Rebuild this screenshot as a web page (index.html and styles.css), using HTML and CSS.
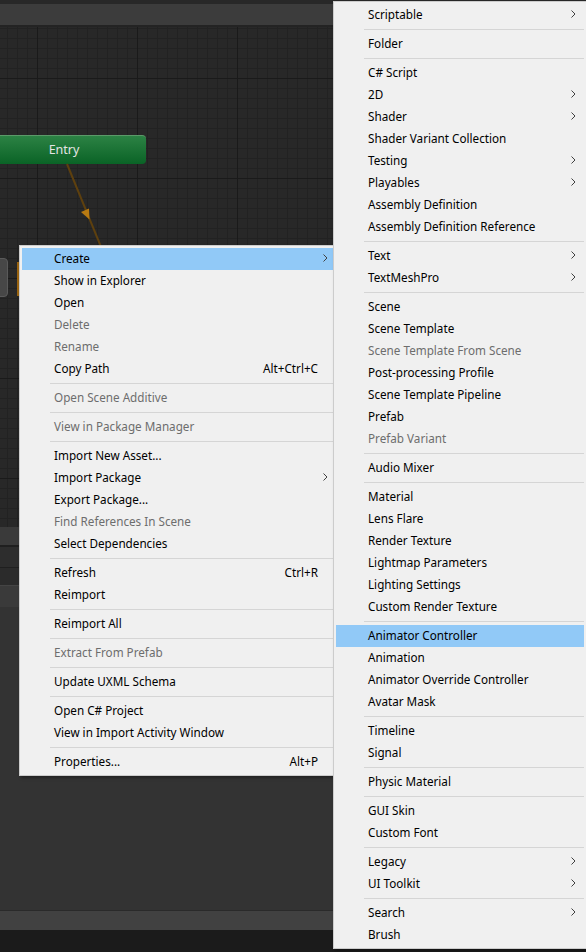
FILE: index.html
```html
<!DOCTYPE html>
<html>
<head>
<meta charset="utf-8">
<title>Unity Create Menu</title>
<link rel="stylesheet" href="styles.css">
</head>
<body>
<div class="screen">
  <div class="editor">
    <div class="topstrip"></div>
    <div class="toolbar"></div>
    <div class="graph">
      <div class="node node-left"></div>
      <div class="sel-edge"></div>
      <div class="node entry">Entry</div>
      <svg class="transition" width="340" height="500" viewBox="0 0 340 500">
        <line x1="67" y1="137" x2="106" y2="232" stroke="#5e400e" stroke-width="2"/>
        <polygon points="89.5,192.5 89,181.5 81,185" fill="#b87a12"/>
      </svg>
    </div>
    <div class="band b1"></div>
    <div class="band b2"></div>
    <div class="band b3"></div>
    <div class="band b4"></div>
    <div class="panel"></div>
    <div class="bottombar"></div>
    <div class="status"></div>
  </div>

  <div class="menu menu-main">
    <div class="item has-sub active"><span class="label">Create</span><span class="sub"><svg width="5" height="8" viewBox="0 0 5 8"><polyline points="0.5,0.5 4,4 0.5,7.5" fill="none" stroke="#404040" stroke-width="1"/></svg></span></div>
    <div class="item"><span class="label">Show in Explorer</span></div>
    <div class="item"><span class="label">Open</span></div>
    <div class="item disabled"><span class="label">Delete</span></div>
    <div class="item disabled"><span class="label">Rename</span></div>
    <div class="item"><span class="label">Copy Path</span><span class="key">Alt+Ctrl+C</span></div>
    <div class="sep"></div>
    <div class="item disabled"><span class="label">Open Scene Additive</span></div>
    <div class="sep"></div>
    <div class="item disabled"><span class="label">View in Package Manager</span></div>
    <div class="sep"></div>
    <div class="item"><span class="label">Import New Asset...</span></div>
    <div class="item has-sub"><span class="label">Import Package</span><span class="sub"><svg width="5" height="8" viewBox="0 0 5 8"><polyline points="0.5,0.5 4,4 0.5,7.5" fill="none" stroke="#404040" stroke-width="1"/></svg></span></div>
    <div class="item"><span class="label">Export Package...</span></div>
    <div class="item disabled"><span class="label">Find References In Scene</span></div>
    <div class="item"><span class="label">Select Dependencies</span></div>
    <div class="sep"></div>
    <div class="item"><span class="label">Refresh</span><span class="key">Ctrl+R</span></div>
    <div class="item"><span class="label">Reimport</span></div>
    <div class="sep"></div>
    <div class="item"><span class="label">Reimport All</span></div>
    <div class="sep"></div>
    <div class="item disabled"><span class="label">Extract From Prefab</span></div>
    <div class="sep"></div>
    <div class="item"><span class="label">Update UXML Schema</span></div>
    <div class="sep"></div>
    <div class="item"><span class="label">Open C# Project</span></div>
    <div class="item"><span class="label">View in Import Activity Window</span></div>
    <div class="sep"></div>
    <div class="item"><span class="label">Properties...</span><span class="key">Alt+P</span></div>
  </div>

  <div class="menu menu-sub">
    <div class="item has-sub"><span class="label">Scriptable</span><span class="sub"><svg width="5" height="8" viewBox="0 0 5 8"><polyline points="0.5,0.5 4,4 0.5,7.5" fill="none" stroke="#404040" stroke-width="1"/></svg></span></div>
    <div class="sep"></div>
    <div class="item"><span class="label">Folder</span></div>
    <div class="sep"></div>
    <div class="item"><span class="label">C# Script</span></div>
    <div class="item has-sub"><span class="label">2D</span><span class="sub"><svg width="5" height="8" viewBox="0 0 5 8"><polyline points="0.5,0.5 4,4 0.5,7.5" fill="none" stroke="#404040" stroke-width="1"/></svg></span></div>
    <div class="item has-sub"><span class="label">Shader</span><span class="sub"><svg width="5" height="8" viewBox="0 0 5 8"><polyline points="0.5,0.5 4,4 0.5,7.5" fill="none" stroke="#404040" stroke-width="1"/></svg></span></div>
    <div class="item"><span class="label">Shader Variant Collection</span></div>
    <div class="item has-sub"><span class="label">Testing</span><span class="sub"><svg width="5" height="8" viewBox="0 0 5 8"><polyline points="0.5,0.5 4,4 0.5,7.5" fill="none" stroke="#404040" stroke-width="1"/></svg></span></div>
    <div class="item has-sub"><span class="label">Playables</span><span class="sub"><svg width="5" height="8" viewBox="0 0 5 8"><polyline points="0.5,0.5 4,4 0.5,7.5" fill="none" stroke="#404040" stroke-width="1"/></svg></span></div>
    <div class="item"><span class="label">Assembly Definition</span></div>
    <div class="item"><span class="label">Assembly Definition Reference</span></div>
    <div class="sep"></div>
    <div class="item has-sub"><span class="label">Text</span><span class="sub"><svg width="5" height="8" viewBox="0 0 5 8"><polyline points="0.5,0.5 4,4 0.5,7.5" fill="none" stroke="#404040" stroke-width="1"/></svg></span></div>
    <div class="item has-sub"><span class="label">TextMeshPro</span><span class="sub"><svg width="5" height="8" viewBox="0 0 5 8"><polyline points="0.5,0.5 4,4 0.5,7.5" fill="none" stroke="#404040" stroke-width="1"/></svg></span></div>
    <div class="sep"></div>
    <div class="item"><span class="label">Scene</span></div>
    <div class="item"><span class="label">Scene Template</span></div>
    <div class="item disabled"><span class="label">Scene Template From Scene</span></div>
    <div class="item"><span class="label">Post-processing Profile</span></div>
    <div class="item"><span class="label">Scene Template Pipeline</span></div>
    <div class="item"><span class="label">Prefab</span></div>
    <div class="item disabled"><span class="label">Prefab Variant</span></div>
    <div class="sep"></div>
    <div class="item"><span class="label">Audio Mixer</span></div>
    <div class="sep"></div>
    <div class="item"><span class="label">Material</span></div>
    <div class="item"><span class="label">Lens Flare</span></div>
    <div class="item"><span class="label">Render Texture</span></div>
    <div class="item"><span class="label">Lightmap Parameters</span></div>
    <div class="item"><span class="label">Lighting Settings</span></div>
    <div class="item"><span class="label">Custom Render Texture</span></div>
    <div class="sep"></div>
    <div class="item active"><span class="label">Animator Controller</span></div>
    <div class="item"><span class="label">Animation</span></div>
    <div class="item"><span class="label">Animator Override Controller</span></div>
    <div class="item"><span class="label">Avatar Mask</span></div>
    <div class="sep"></div>
    <div class="item"><span class="label">Timeline</span></div>
    <div class="item"><span class="label">Signal</span></div>
    <div class="sep"></div>
    <div class="item"><span class="label">Physic Material</span></div>
    <div class="sep"></div>
    <div class="item"><span class="label">GUI Skin</span></div>
    <div class="item"><span class="label">Custom Font</span></div>
    <div class="sep"></div>
    <div class="item has-sub"><span class="label">Legacy</span><span class="sub"><svg width="5" height="8" viewBox="0 0 5 8"><polyline points="0.5,0.5 4,4 0.5,7.5" fill="none" stroke="#404040" stroke-width="1"/></svg></span></div>
    <div class="item has-sub"><span class="label">UI Toolkit</span><span class="sub"><svg width="5" height="8" viewBox="0 0 5 8"><polyline points="0.5,0.5 4,4 0.5,7.5" fill="none" stroke="#404040" stroke-width="1"/></svg></span></div>
    <div class="sep"></div>
    <div class="item has-sub"><span class="label">Search</span><span class="sub"><svg width="5" height="8" viewBox="0 0 5 8"><polyline points="0.5,0.5 4,4 0.5,7.5" fill="none" stroke="#404040" stroke-width="1"/></svg></span></div>
    <div class="item"><span class="label">Brush</span></div>
  </div>
</div>
</body>
</html>
```

FILE: styles.css
```css
html, body {
  margin: 0;
  padding: 0;
  background: #1b1b1b;
}

.screen {
  position: relative;
  width: 586px;
  height: 952px;
  overflow: hidden;
  font-family: "Noto Sans", "Liberation Sans", sans-serif;
}

.editor {
  display: flex;
  flex-direction: column;
  width: 586px;
  height: 952px;
}

.topstrip {
  height: 4px;
  background: #282828;
}

.toolbar {
  height: 21px;
  background: #3c3c3c;
  border-bottom: 2px solid #232323;
}

.graph {
  position: relative;
  height: 500px;
  overflow: hidden;
  background-color: #282828;
  background-image:
    linear-gradient(to right, #1a1a1a 1px, transparent 1px),
    linear-gradient(to bottom, #1a1a1a 1px, transparent 1px),
    linear-gradient(to right, #222222 1px, transparent 1px),
    linear-gradient(to bottom, #222222 1px, transparent 1px);
  background-size: 100px 100px, 100px 100px, 10px 10px, 10px 10px;
  background-position: 37px 0, 0 51px, 7px 0, 0 1px;
}

.node {
  position: absolute;
  box-sizing: border-box;
  border-radius: 4px;
}

.entry {
  left: -18px;
  top: 108px;
  width: 164px;
  height: 29px;
  background: linear-gradient(to bottom, #2c8244, #0a6326);
  border-top: 1px solid #5b9a69;
  color: #e4e4e4;
  font-size: 12.5px;
  line-height: 28px;
  text-align: center;
}

.node-left {
  left: -12px;
  top: 231px;
  width: 20px;
  height: 39px;
  background: #474747;
  border: 1px solid #5a5a5a;
}

.sel-edge {
  position: absolute;
  left: 17px;
  top: 235px;
  width: 2px;
  height: 34px;
  background: #9a6411;
}

.transition {
  position: absolute;
  left: 0;
  top: 0;
}

.b1 {
  height: 18px;
  background: #3a3a3a;
  border-bottom: 2px solid #1f1f1f;
}

.b2 {
  height: 20px;
  background: #2d2d2d;
  border-bottom: 1px solid #1f1f1f;
}

.b3 {
  height: 17px;
  background: #2b2b2b;
}

.b4 {
  height: 21px;
  background: #3a3a3a;
  border-top: 1px solid #444444;
}

.panel {
  height: 303px;
  background: #333333;
}

.bottombar {
  height: 19px;
  background: #414141;
  border-top: 1px solid #2a2a2a;
}

.status {
  height: 22px;
  background: #1b1b1b;
}

/* Menus */
.menu {
  position: absolute;
  box-sizing: content-box;
  background: #f0f0f0;
  border: 1px solid #cccccc;
  padding: 2px;
  box-shadow: 2px 2px 3px rgba(0, 0, 0, 0.35);
  font-size: 11.7px;
  color: #000000;
}

.menu-main {
  left: 19px;
  top: 245px;
  width: 314px;
}

.menu-sub {
  left: 333px;
  top: 1px;
  width: 248px;
}

.item {
  box-sizing: border-box;
  display: flex;
  align-items: center;
  height: 22px;
  padding: 0 18px 2px 32px;
  white-space: nowrap;
}

.item.has-sub {
  padding-right: 0;
}

.item .label {
  flex: 1;
}

.item .key {
  margin-left: auto;
}

.item .sub {
  width: 18px;
  display: flex;
  align-items: center;
}

.item .sub svg {
  margin-left: 5px;
}

.item.active {
  background: #91c9f7;
}

.item.disabled {
  color: #6d6d6d;
}

.sep {
  height: 7px;
  margin-left: 28px;
  background: linear-gradient(to bottom, transparent 3px, #d5d5d5 3px, #d5d5d5 4px, transparent 4px);
}
```
